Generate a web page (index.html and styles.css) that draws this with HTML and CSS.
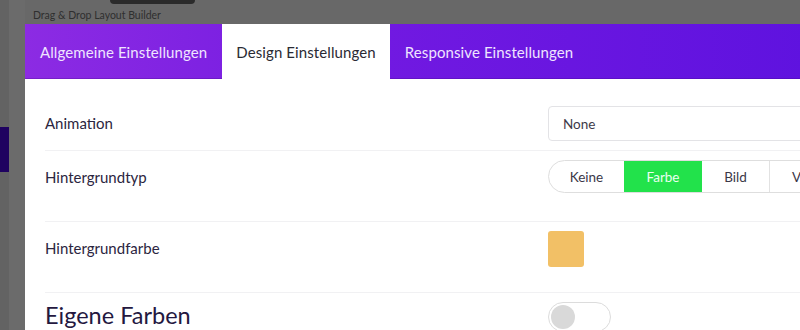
FILE: index.html
```html
<!DOCTYPE html>
<html lang="de">
<head>
<meta charset="utf-8">
<link rel="stylesheet" href="styles.css">
</head>
<body>
<div class="page">
  <div class="side-block"></div>
  <div class="topbar">
    <span class="pill"></span>
    <div class="brand-sub">Drag &amp; Drop Layout Builder</div>
  </div>
  <div class="modal">
    <div class="tabs">
      <div class="tab">Allgemeine Einstellungen</div>
      <div class="tab active">Design Einstellungen</div>
      <div class="tab">Responsive Einstellungen</div>
    </div>
    <div class="body">
      <div class="row first">
        <div class="label">Animation</div>
        <div class="control"><div class="select">None</div></div>
      </div>
      <div class="row">
        <div class="label">Hintergrundtyp</div>
        <div class="control">
          <div class="segments">
            <div class="seg s1">Keine</div>
            <div class="seg s2 on">Farbe</div>
            <div class="seg s3">Bild</div>
            <div class="seg s4">Video</div>
          </div>
        </div>
      </div>
      <div class="row">
        <div class="label">Hintergrundfarbe</div>
        <div class="control"><div class="swatch"></div></div>
      </div>
      <div class="row last">
        <div class="label big">Eigene Farben</div>
        <div class="control"><div class="toggle"><span class="knob"></span></div></div>
      </div>
    </div>
  </div>
</div>
</body>
</html>
```

FILE: styles.css
```css
html, body {
  margin: 0;
  padding: 0;
  width: 800px;
  height: 330px;
  overflow: hidden;
  background: #676767;
  font-family: Lato, "Noto Sans", sans-serif;
}
.page {
  position: relative;
  width: 800px;
  height: 330px;
  overflow: hidden;
  background: linear-gradient(90deg, #636363 0, #636363 9px, #6b6b6b 9px, #6b6b6b 25px, #686868 25px);
}
.side-block {
  position: absolute;
  left: 0;
  top: 127px;
  width: 9px;
  height: 45px;
  background: #1f0260;
}
.topbar {
  height: 24px;
  padding: 9px 0 0 33px;
  box-sizing: border-box;
  position: relative;
}
.pill {
  position: absolute;
  left: 110px;
  top: 0;
  width: 85px;
  height: 4px;
  background: #2b2b2b;
  border-radius: 0 0 4px 4px;
}
.brand-sub {
  font-size: 10.5px;
  line-height: 12px;
  color: #2f2f2f;
}
.modal {
  margin-left: 25px;
  width: 800px;
  height: 306px;
  background: #fff;
}
.tabs {
  display: flex;
  height: 55px;
  background: linear-gradient(90deg, #8c2be3 0%, #7119e1 45%, #5e12df 100%);
  box-shadow: inset 0 -1px 0 rgba(60, 0, 120, 0.25);
}
.tab {
  padding: 0 15px;
  display: flex;
  align-items: center;
  font-size: 15px;
  color: #efe4ff;
  letter-spacing: 0.1px;
}
.tab.active {
  background: #fff;
  color: #2a2a33;
  padding: 0 14px;
}
.body {
  padding-left: 20px;
}
.row {
  display: flex;
  align-items: flex-start;
  height: 71px;
  box-sizing: border-box;
  padding-top: 9px;
  border-bottom: 1px solid #f1f1f3;
}
.row.first {
  height: 72px;
  padding-top: 27px;
}
.row.last {
  border-bottom: none;
}
.label {
  width: 503px;
  flex: none;
  font-size: 15px;
  color: #2b2540;
  display: flex;
  align-items: center;
  min-height: 33px;
}
.label.big {
  font-size: 23.5px;
  line-height: 26px;
  color: #24183f;
  min-height: 26px;
}
.control {
  flex: 1;
}
.select {
  height: 35px;
  box-sizing: border-box;
  border: 1px solid #e3e3e6;
  border-radius: 4px;
  padding-left: 14px;
  display: flex;
  align-items: center;
  font-size: 13.5px;
  color: #3d3a48;
  width: 400px;
}
.segments {
  display: flex;
  height: 33px;
  box-sizing: border-box;
  border: 1px solid #dedede;
  border-radius: 17px 0 0 17px;
  overflow: hidden;
  width: 360px;
}
.seg {
  display: flex;
  align-items: center;
  justify-content: center;
  font-size: 13.5px;
  color: #3b3747;
  border-right: 1px solid #e2e2e2;
  flex: none;
}
.s1 { width: 75px; border-right: none; }
.s2 { width: 78px; }
.s3 { width: 67px; }
.s4 { width: 70px; justify-content: flex-start; padding-left: 22px; }
.seg.on {
  background: #22e24b;
  color: #eafff0;
  border-right: none;
}
.swatch {
  width: 36px;
  height: 36px;
  border-radius: 3px;
  background: #f2c066;
}
.toggle {
  width: 63px;
  height: 30px;
  box-sizing: border-box;
  border: 1px solid #dcdcdc;
  border-radius: 15px;
  padding: 2px;
}
.knob {
  display: block;
  width: 24px;
  height: 24px;
  border-radius: 50%;
  background: #d9d9d9;
}
```
